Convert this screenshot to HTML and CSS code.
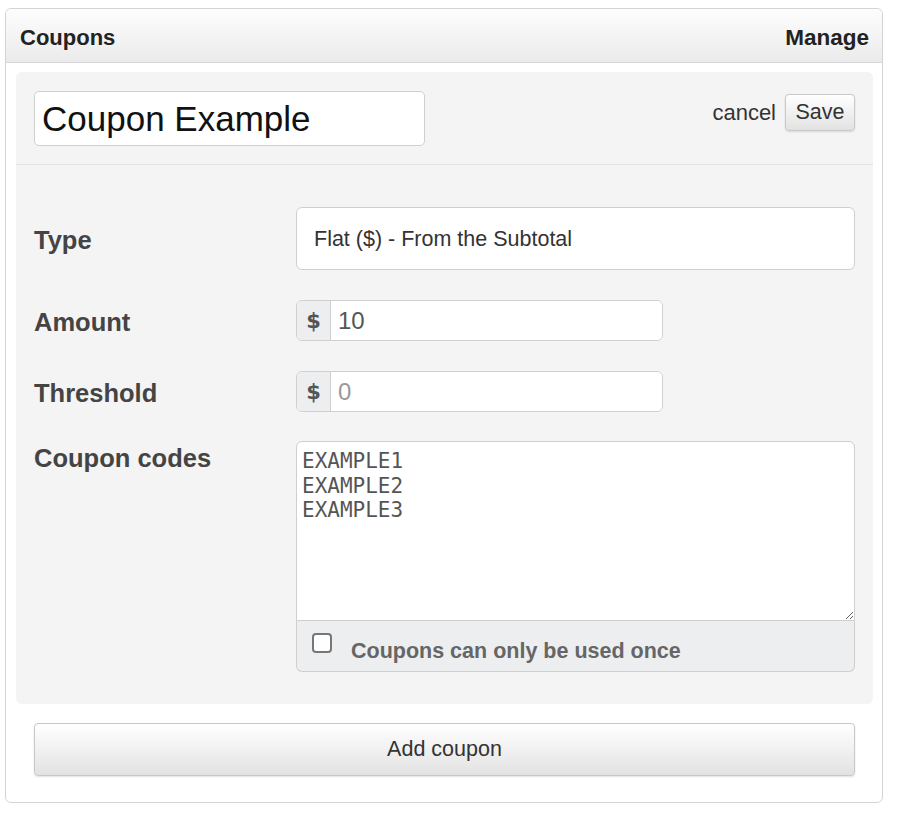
FILE: index.html
```html
<!DOCTYPE html>
<html lang="en">
<head>
    <meta charset="UTF-8">
    <title>Coupons</title>
    <link rel="stylesheet" href="styles.css">
</head>
<body>
    <div class="panel">
        <div class="panel-header">
            <span class="panel-title">Coupons</span>
            <a href="#" class="manage">Manage</a>
        </div>

        <div class="panel-body">
            <div class="coupon-edit">
                <!-- Name and actions -->
                <div class="edit-top">
                    <input type="text" class="name-input" value="Coupon Example">
                    <div class="actions">
                        <a href="#" class="cancel">cancel</a>
                        <button class="btn btn-save">Save</button>
                    </div>
                </div>

                <!-- Fields -->
                <div class="fields">
                    <div class="field">
                        <label class="field-label">Type</label>
                        <select class="type-select">
                            <option>Flat ($) - From the Subtotal</option>
                            <option>Percent (%) - From the Subtotal</option>
                        </select>
                    </div>

                    <div class="field">
                        <label class="field-label">Amount</label>
                        <div class="input-group">
                            <span class="addon">$</span>
                            <input type="text" class="money-input" value="10">
                        </div>
                    </div>

                    <div class="field">
                        <label class="field-label">Threshold</label>
                        <div class="input-group">
                            <span class="addon">$</span>
                            <input type="text" class="money-input" placeholder="0">
                        </div>
                    </div>

                    <div class="field field-top">
                        <label class="field-label">Coupon codes</label>
                        <div class="codes">
                            <textarea class="codes-text">EXAMPLE1
EXAMPLE2
EXAMPLE3</textarea>
                            <label class="codes-footer">
                                <input type="checkbox" class="check">
                                <span class="check-text">Coupons can only be used once</span>
                            </label>
                        </div>
                    </div>
                </div>
            </div>

            <button class="btn btn-add">Add coupon</button>
        </div>
    </div>
</body>
</html>
```

FILE: styles.css
```css
body {
    font-family: "Liberation Sans", Arial, sans-serif;
    margin: 0;
    padding: 8px 0 0 5px;
    background: #fff;
    color: #333;
}
.panel {
    width: 876px;
    border: 1px solid #d4d4d4;
    border-radius: 6px;
    background: #fff;
}
.panel-header {
    display: flex;
    justify-content: space-between;
    align-items: center;
    box-sizing: border-box;
    height: 54px;
    padding: 4px 13px 0 14px;
    background: linear-gradient(to bottom, #fdfdfd, #ebebeb);
    border-bottom: 1px solid #d6d6d6;
    border-radius: 6px 6px 0 0;
    font-size: 22px;
    font-weight: bold;
}
.panel-title {
    color: #222;
}
.manage {
    color: #222;
    text-decoration: none;
    font-size: 22.5px;
}
.panel-body {
    padding: 9px 9px 26px 10px;
}
.coupon-edit {
    background: #f4f4f4;
    border-radius: 6px;
}
.edit-top {
    display: flex;
    justify-content: space-between;
    align-items: flex-start;
    padding: 19px 18px 18px;
    border-bottom: 1px solid #e3e3e3;
}
.name-input {
    box-sizing: border-box;
    width: 391px;
    height: 55px;
    padding: 0 7px;
    border: 1px solid #cfcfcf;
    border-radius: 5px;
    font-family: "Liberation Sans", Arial, sans-serif;
    font-size: 35px;
    color: #111;
}
.actions {
    display: flex;
    align-items: center;
    gap: 9px;
    margin-top: 3px;
}
.cancel {
    color: #333;
    text-decoration: none;
    font-size: 22px;
}
.btn {
    font-family: "Liberation Sans", Arial, sans-serif;
    color: #333;
    background: linear-gradient(to bottom, #ffffff, #e2e2e2);
    border: 1px solid #c8c8c8;
    border-radius: 4px;
    box-shadow: 0 1px 2px rgba(0, 0, 0, 0.12);
    cursor: pointer;
}
.btn-save {
    width: 70px;
    height: 37px;
    font-size: 21.5px;
    padding: 0;
}
.fields {
    padding: 42px 18px 32px;
    display: flex;
    flex-direction: column;
    gap: 30px;
}
.field {
    display: flex;
    align-items: center;
}
.field-top {
    align-items: flex-start;
    margin-top: -1px;
}
.field-label {
    width: 262px;
    flex-shrink: 0;
    padding-top: 3px;
    font-size: 25.5px;
    font-weight: bold;
    color: #444;
}
.type-select {
    appearance: none;
    -webkit-appearance: none;
    box-sizing: border-box;
    width: 559px;
    height: 63px;
    padding: 0 17px;
    background: #fff;
    border: 1px solid #cfcfcf;
    border-radius: 6px;
    font-family: "Liberation Sans", Arial, sans-serif;
    font-size: 21.5px;
    color: #333;
}
.input-group {
    display: flex;
    width: 367px;
    height: 41px;
    box-sizing: border-box;
    border: 1px solid #cfcfcf;
    border-radius: 6px;
    overflow: hidden;
    background: #fff;
}
.addon {
    width: 33px;
    flex-shrink: 0;
    display: flex;
    align-items: center;
    justify-content: center;
    background: #eceef0;
    border-right: 1px solid #cfcfcf;
    font-family: "DejaVu Sans", sans-serif;
    font-size: 21px;
    font-weight: bold;
    color: #555;
}
.money-input {
    flex: 1;
    min-width: 0;
    border: none;
    padding: 0 7px;
    font-family: "Liberation Sans", Arial, sans-serif;
    font-size: 24px;
    color: #555;
    outline: none;
}
.money-input::placeholder {
    color: #999;
}
.codes {
    width: 559px;
}
.codes-text {
    display: block;
    box-sizing: border-box;
    width: 100%;
    height: 180px;
    margin: 0;
    padding: 7px 5px;
    border: 1px solid #cfcfcf;
    border-radius: 6px 6px 0 0;
    font-family: "DejaVu Sans Mono", monospace;
    font-size: 21px;
    line-height: 24.5px;
    color: #555;
}
.codes-footer {
    display: flex;
    align-items: flex-start;
    gap: 19px;
    box-sizing: border-box;
    height: 51px;
    padding: 12px 15px 0;
    background: #eceef0;
    border: 1px solid #cfcfcf;
    border-top: none;
    border-radius: 0 0 6px 6px;
    font-size: 21.5px;
    font-weight: bold;
    color: #666;
}
.check {
    appearance: none;
    -webkit-appearance: none;
    flex-shrink: 0;
    width: 20px;
    height: 20px;
    margin: 0;
    background: #fff;
    border: 2px solid #777;
    border-radius: 4px;
}
.check-text {
    margin-top: 6px;
    line-height: 1.2;
}
.btn-add {
    display: block;
    width: 821px;
    height: 53px;
    margin: 19px 0 0 18px;
    font-size: 21.5px;
}
```
